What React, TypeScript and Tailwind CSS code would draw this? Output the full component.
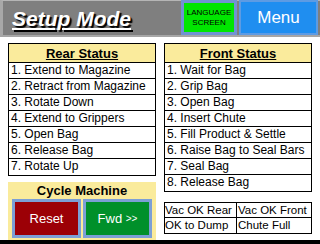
import React from "react";

const rear = [
  "1. Extend to Magazine",
  "2. Retract from Magazine",
  "3. Rotate Down",
  "4. Extend to Grippers",
  "5. Open Bag",
  "6. Release Bag",
  "7. Rotate Up",
];
const front = [
  "1. Wait for Bag",
  "2. Grip Bag",
  "3. Open Bag",
  "4. Insert Chute",
  "5. Fill Product & Settle",
  "6. Raise Bag to Seal Bars",
  "7. Seal Bag",
  "8. Release Bag",
];

function StatusTable({ title, items }: { title: string; items: string[] }) {
  return (
    <div className="border border-black flex flex-col">
      <div className="h-[19px] bg-[#faeb9c] border-b border-black flex items-center justify-center text-[13px] font-bold underline leading-none text-black">
        {title}
      </div>
      {items.map((t, i) => (
        <div
          key={t}
          className={`h-[16px] pl-[2px] text-[12px] leading-[15px] text-black whitespace-nowrap ${
            i < items.length - 1 ? "border-b border-black" : ""
          }`}
        >
          {t}
        </div>
      ))}
    </div>
  );
}

export default function App() {
  return (
    <div
      className="w-[320px] h-[244px] bg-white flex flex-col overflow-hidden"
      style={{ fontFamily: '"Liberation Sans", Arial, sans-serif' }}
    >
      {/* Header */}
      <div className="h-[37px] bg-[#7f7f7f] border-l-[3px] border-l-[#a8a8a8] border-t border-t-[#b5b5b5] border-b-2 border-b-[#a6a6a6] flex items-stretch">
        <div className="flex items-center pl-[9px] flex-1">
          <span className="text-white text-[21px] font-bold italic underline underline-offset-[2px] leading-none [text-shadow:2px_2px_1px_#000]">
            Setup Mode
          </span>
        </div>
        <div className="w-[56px] -mt-px border-[3px] border-[#7193d2] bg-[#00e600] flex flex-col items-center justify-center text-[8px] leading-[10px] text-black">
          <span>LANGUAGE</span>
          <span>SCREEN</span>
        </div>
        <div className="w-[2px]" />
        <div className="w-[79px] -mt-px border-2 border-[#5d9be3] bg-[#1f8ef0] flex items-center justify-center text-white text-[17px]">
          Menu
        </div>
        <div className="w-[2px]" />
      </div>

      {/* Body */}
      <div className="flex-1 flex px-[8px] pt-[6px] gap-[8px]">
        <div className="w-[148px] flex flex-col">
          <StatusTable title="Rear Status" items={rear} />
          <div className="mt-[6px] flex-1 bg-[#faeb9c] flex flex-col">
            <div className="h-[17px] flex items-center justify-center text-[13px] font-bold text-black leading-none">
              Cycle Machine
            </div>
            <div className="flex-1 flex gap-[2px] px-[4px] pb-[2px]">
              <div className="flex-1 border-[3px] border-[#7c9fd6] bg-[#9c0006] flex items-center justify-center text-white text-[13px]">
                Reset
              </div>
              <div className="flex-1 border-[3px] border-[#7c9fd6] bg-[#00902a] flex items-center justify-center text-white text-[13px]">
                Fwd&nbsp;<span className="text-[10px]">&gt;&gt;</span>
              </div>
            </div>
          </div>
        </div>
        <div className="w-[148px] flex flex-col">
          <StatusTable title="Front Status" items={front} />
          <div className="mt-[10px] border border-black grid grid-cols-[72px_1fr] text-[11.5px] leading-[14px] text-black">
            <div className="border-r border-b border-black h-[15px] whitespace-nowrap">Vac OK Rear</div>
            <div className="border-b border-black h-[15px] pl-[1px] whitespace-nowrap">Vac OK Front</div>
            <div className="border-r border-black h-[15px] whitespace-nowrap">OK to Dump</div>
            <div className="h-[15px] pl-[1px] whitespace-nowrap">Chute Full</div>
          </div>
        </div>
      </div>
      <div className="h-[4px] bg-black" />
    </div>
  );
}
